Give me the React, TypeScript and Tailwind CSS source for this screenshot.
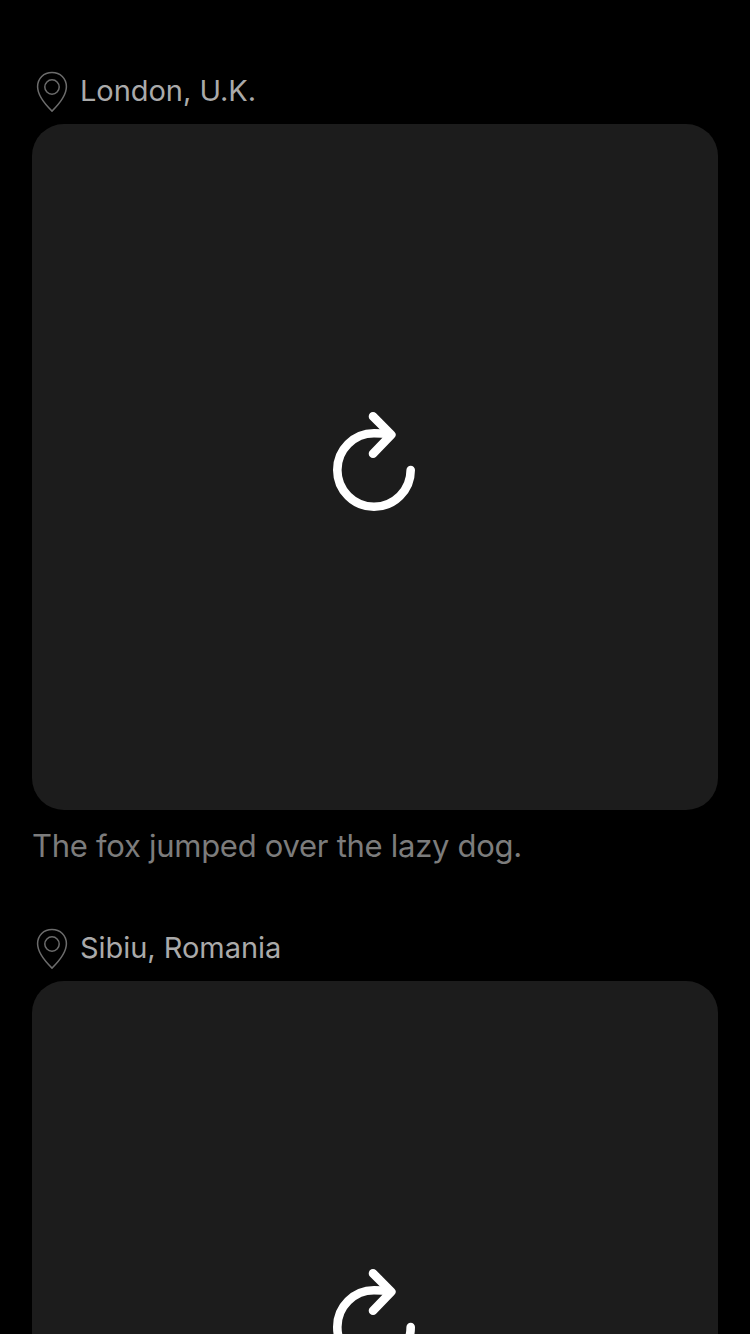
function PinIcon() {
  return (
    <svg className="h-[42px] w-8 shrink-0" viewBox="0 0 32 42" fill="none" stroke="#6c6c6c" strokeWidth="1.5" strokeLinejoin="round">
      <path d="M16 40.1C11 35.2 1.6 25.5 1.6 15.8C1.6 7.4 7.8 1.6 16 1.6S30.4 7.4 30.4 15.8C30.4 25.5 21 35.2 16 40.1Z" />
      <circle cx="16" cy="16" r="7.2" />
    </svg>
  );
}

function RetryIcon() {
  return (
    <svg className="h-[100px] w-[84px]" viewBox="0 0 84 100" fill="none" stroke="#fff" strokeWidth="8.6" strokeLinecap="round" strokeLinejoin="round">
      <path d="M78.7 58A36.7 36.7 0 1 1 42 21.3Q50 21.3 58 22.5" />
      <path d="M41 4.4L59.3 22.7L41 41.7" />
    </svg>
  );
}

type PostProps = { location: string; caption?: string };

function Post({ location, caption }: PostProps) {
  return (
    <article className="flex flex-col">
      <header className="flex h-[42px] items-center gap-3 pl-1">
        <PinIcon />
        <h2 className="pb-0.5 text-[29px] leading-[36px] tracking-[-0.04px] whitespace-nowrap text-[#aaaaaa]">{location}</h2>
      </header>
      <button type="button" aria-label="Reload photo" className="mt-[11px] flex h-[686px] w-full items-center justify-center rounded-[32px] bg-[#1c1c1c] pr-0.5 pb-[10px]">
        <RetryIcon />
      </button>
      {caption && <p className="mt-4 text-[31px] leading-[40px] tracking-[-0.28px] whitespace-nowrap text-[#7c7c7c]">{caption}</p>}
    </article>
  );
}

export default function App() {
  return (
    <main className="flex h-[1334px] w-full flex-col gap-[62px] overflow-hidden bg-black px-8 pt-[71px] font-['Inter','Liberation_Sans',sans-serif]">
      <Post location="London, U.K." caption="The fox jumped over the lazy dog." />
      <Post location="Sibiu, Romania" />
    </main>
  );
}
